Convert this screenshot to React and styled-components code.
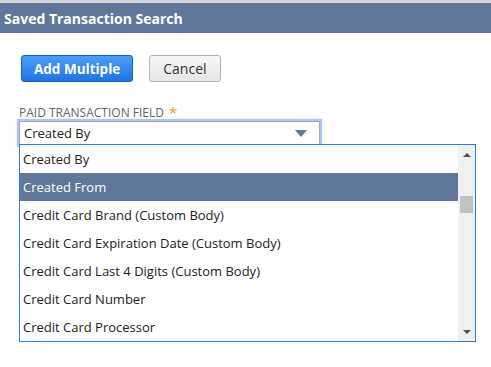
import React from "react";
import styled, { createGlobalStyle } from "styled-components";

const Global = createGlobalStyle`
  html, body { margin: 0; padding: 0; background: #fff; }
  body { font-family: "Open Sans", "Liberation Sans", sans-serif; color: #222; }
`;

const Page = styled.div`
  width: 491px;
  height: 367px;
  overflow: hidden;
  border-top: 3px solid #d6d6d6;
  box-sizing: border-box;
`;

const Header = styled.div`
  height: 30px;
  background: #607799;
  display: flex;
  align-items: center;
  padding-left: 4px;
  color: #fff;
  font-weight: 700;
  font-size: 14px;
`;

const Body = styled.div`
  padding: 22px 0 0 19px;
`;

const Toolbar = styled.div`
  display: flex;
  gap: 16px;
  padding-left: 2px;
`;

const Button = styled.button`
  height: 27px;
  box-sizing: border-box;
  padding: 0 ${(p) => (p.$primary ? "12px" : "13px")};
  border-radius: 3px;
  font-family: "Open Sans", "Liberation Sans", sans-serif;
  font-size: ${(p) => (p.$primary ? "13.5px" : "14px")};
  font-weight: ${(p) => (p.$primary ? 700 : 400)};
  color: ${(p) => (p.$primary ? "#fff" : "#333")};
  border: 1px solid ${(p) => (p.$primary ? "#1a5fc4" : "#b4b4b4")};
  background: ${(p) =>
    p.$primary
      ? "linear-gradient(#4c9ff5, #1f74e3)"
      : "linear-gradient(#f7f7f7, #e6e6e6)"};
  cursor: pointer;
`;

const Label = styled.div`
  margin-top: 22px;
  font-size: 12px;
  color: #666;
  line-height: 16px;
  height: 16px;
`;

const Star = styled.span`
  color: #e39b1b;
  font-size: 15px;
  margin-left: 5px;
  vertical-align: -1px;
`;

const Field = styled.div`
  position: relative;
  width: 301px;
  margin-top: 1px;
`;

const SelectBox = styled.div`
  height: 24px;
  box-sizing: border-box;
  border: 1px solid #a9a9a9;
  box-shadow: 0 0 1px 2px #a9c9f2;
  display: flex;
  align-items: center;
  justify-content: space-between;
  padding: 0 12px 0 4px;
  font-size: 13px;
  color: #222;
`;

const Caret = styled.span`
  width: 0;
  height: 0;
  border-left: 6px solid transparent;
  border-right: 6px solid transparent;
  border-top: 7px solid #607799;
`;

const Menu = styled.div`
  position: absolute;
  top: 23px;
  left: 0;
  width: 457px;
  box-sizing: border-box;
  border: 1px solid #2a7de1;
  background: #fff;
  display: flex;
`;

const List = styled.div`
  flex: 1;
`;

const Item = styled.div`
  height: 28px;
  display: flex;
  align-items: center;
  padding-left: 3px;
  font-size: 13px;
  background: ${(p) => (p.$active ? "#607799" : "#fff")};
  color: ${(p) => (p.$active ? "#fff" : "#222")};
`;

const Scrollbar = styled.div`
  width: 17px;
  background: #f0f0f0;
  display: flex;
  flex-direction: column;
  align-items: center;
  padding-top: 8px;
  box-sizing: border-box;
`;

const Arrow = styled.span`
  width: 0;
  height: 0;
  border-left: 4px solid transparent;
  border-right: 4px solid transparent;
  ${(p) =>
    p.$up ? "border-bottom: 4px solid #505050;" : "border-top: 4px solid #505050;"}
`;

const Thumb = styled.div`
  width: 13px;
  height: 17px;
  background: #c1c1c1;
  margin-top: 39px;
`;

const Spacer = styled.div`
  flex: 1;
`;

const BottomGap = styled.div`
  height: 7px;
`;

const items = [
  "Created By",
  "Created From",
  "Credit Card Brand (Custom Body)",
  "Credit Card Expiration Date (Custom Body)",
  "Credit Card Last 4 Digits (Custom Body)",
  "Credit Card Number",
  "Credit Card Processor",
];

export default function App() {
  return (
    <>
      <Global />
      <Page>
        <Header>Saved Transaction Search</Header>
        <Body>
          <Toolbar>
            <Button $primary>Add Multiple</Button>
            <Button>Cancel</Button>
          </Toolbar>
          <Label>
            PAID TRANSACTION FIELD<Star>*</Star>
          </Label>
          <Field>
            <SelectBox>
              <span>Created By</span>
              <Caret />
            </SelectBox>
            <Menu>
              <List>
                {items.map((t, i) => (
                  <Item key={t} $active={i === 1}>
                    {t}
                  </Item>
                ))}
              </List>
              <Scrollbar>
                <Arrow $up />
                <Thumb />
                <Spacer />
                <Arrow />
                <BottomGap />
              </Scrollbar>
            </Menu>
          </Field>
        </Body>
      </Page>
    </>
  );
}
